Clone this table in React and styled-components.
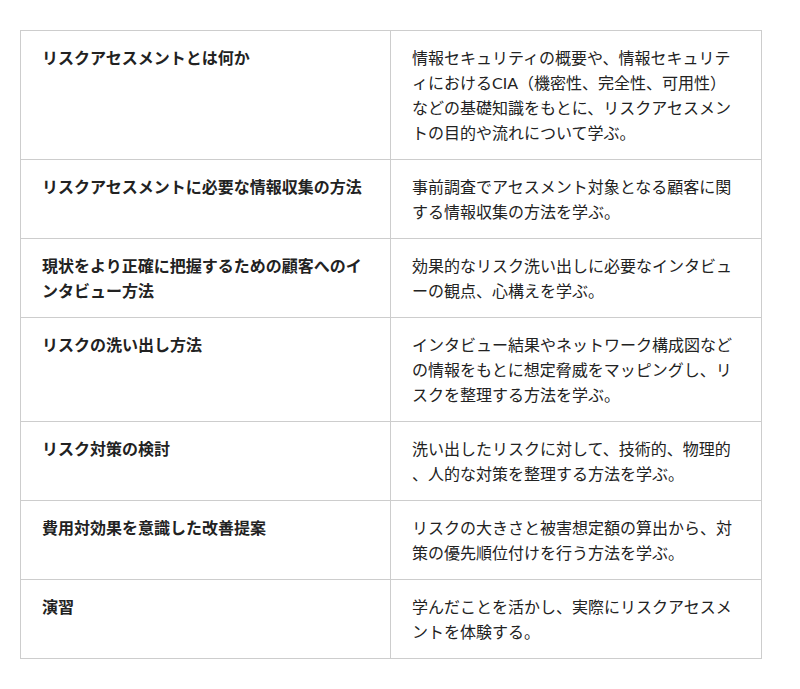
import React from 'react'
import styled, { createGlobalStyle } from 'styled-components'

const GlobalStyle = createGlobalStyle`
  body {
    margin: 0;
    background: #fff;
    font-family: Lato, "Noto Sans CJK JP", sans-serif;
    color: #222;
  }
`

const Page = styled.div`
  padding: 30px 20px;
`

const Table = styled.table`
  width: 742px;
  border-collapse: collapse;
  table-layout: fixed;
`

const Cell = styled.td`
  box-sizing: border-box;
  width: ${props => props.$w || 'auto'};
  border: 1px solid #cdcdcd;
  padding: 14px 20px 14px 21px;
  vertical-align: top;
  font-size: 16px;
  line-height: 25px;
  line-break: anywhere;
  font-weight: ${props => props.$bold ? 700 : 400};
`

const rows = [
  ['リスクアセスメントとは何か', '情報セキュリティの概要や、情報セキュリティにおけるCIA（機密性、完全性、可用性）などの基礎知識をもとに、リスクアセスメントの目的や流れについて学ぶ。'],
  ['リスクアセスメントに必要な情報収集の方法', '事前調査でアセスメント対象となる顧客に関する情報収集の方法を学ぶ。'],
  ['現状をより正確に把握するための顧客へのインタビュー方法', '効果的なリスク洗い出しに必要なインタビューの観点、心構えを学ぶ。'],
  ['リスクの洗い出し方法', 'インタビュー結果やネットワーク構成図などの情報をもとに想定脅威をマッピングし、リスクを整理する方法を学ぶ。'],
  ['リスク対策の検討', '洗い出したリスクに対して、技術的、物理的、人的な対策を整理する方法を学ぶ。'],
  ['費用対効果を意識した改善提案', 'リスクの大きさと被害想定額の算出から、対策の優先順位付けを行う方法を学ぶ。'],
  ['演習', '学んだことを活かし、実際にリスクアセスメントを体験する。']
]

export default function App () {
  return (
    <Page>
      <GlobalStyle />
      <Table>
        <tbody>
          {rows.map(([title, desc]) => (
            <tr key={title}>
              <Cell $w='370px' $bold>{title}</Cell>
              <Cell>{desc}</Cell>
            </tr>
          ))}
        </tbody>
      </Table>
    </Page>
  )
}
